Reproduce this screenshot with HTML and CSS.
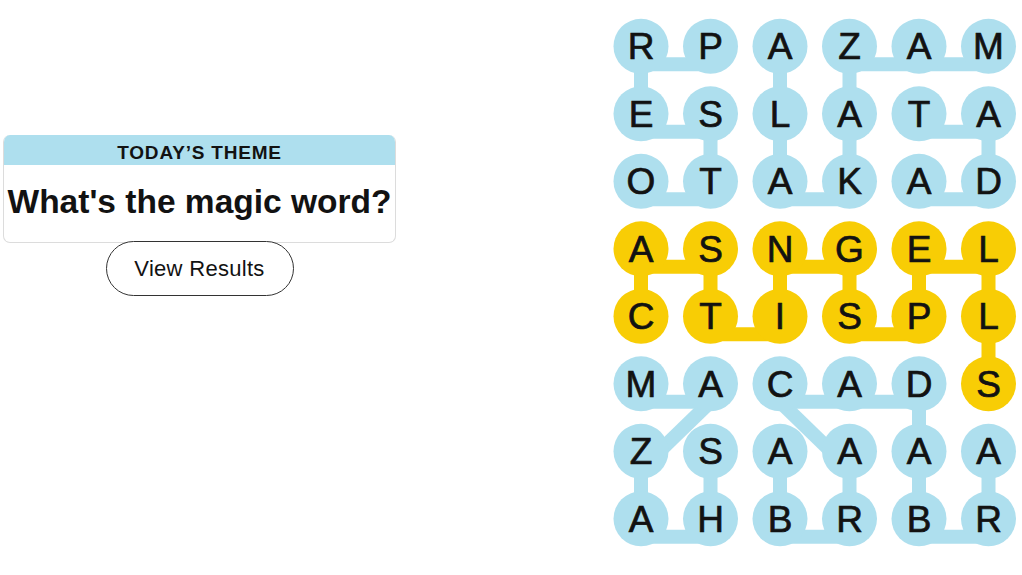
FILE: index.html
```html
<!DOCTYPE html>
<html lang="en">
<head>
  <meta charset="UTF-8" />
  <meta name="viewport" content="width=device-width, initial-scale=1.0"/>
  <title>Strands</title>
  <link rel="stylesheet" href="styles.css">
</head>
<body>
  <div class="page">
    <div class="theme">
      <div class="card">
        <div class="card-head">TODAY’S THEME</div>
        <div class="card-body">What's the magic word?</div>
      </div>
      <button class="results-btn">View Results</button>
    </div>

    <svg id="board" class="board" width="422" height="575" viewBox="0 0 422 575"></svg>
  </div>

  <script>
    const letters = [
      "RPAZAM",
      "ESLATA",
      "OTAKAD",
      "ASNGEL",
      "CTISPL",
      "MACADS",
      "ZSAAAA",
      "AHBRBR"
    ];

    // found words, as [row, col] in the order they were traced
    const words = [
      { color: "#aedfee", cells: [[0,1],[0,0],[1,0],[1,1],[2,1],[2,0]] },
      { color: "#aedfee", cells: [[0,2],[1,2],[2,2],[2,3],[1,3],[0,3],[0,4],[0,5]] },
      { color: "#aedfee", cells: [[1,4],[1,5],[2,5],[2,4]] },
      { color: "#aedfee", cells: [[6,1],[7,1],[7,0],[6,0],[5,1],[5,0]] },
      { color: "#aedfee", cells: [[6,2],[7,2],[7,3],[6,3],[5,2],[5,3],[5,4],[6,4],[7,4],[7,5],[6,5]] },
      { color: "#f8cd05", cells: [[4,0],[3,0],[3,1],[4,1],[4,2],[3,2],[3,3],[4,3],[4,4],[3,4],[3,5],[4,5],[5,5]] }
    ];

    const cx = c => 41 + c * 69.5;
    const cy = r => 46.3 + r * 67.5;
    const lineDrop = 18;

    const colorOf = {};
    words.forEach(w => w.cells.forEach(([r, c]) => colorOf[r + "," + c] = w.color));

    let lines = "";
    words.forEach(w => {
      for (let i = 1; i < w.cells.length; i++) {
        const [r1, c1] = w.cells[i - 1];
        const [r2, c2] = w.cells[i];
        lines += `<line x1="${cx(c1)}" y1="${cy(r1) + lineDrop}" x2="${cx(c2)}" y2="${cy(r2) + lineDrop}" stroke="${w.color}" stroke-width="14"/>`;
      }
    });

    let dots = "";
    letters.forEach((row, r) => {
      row.split("").forEach((ch, c) => {
        const fill = colorOf[r + "," + c] || "#aedfee";
        dots += `<circle cx="${cx(c)}" cy="${cy(r)}" r="27.5" fill="${fill}"/>`;
        dots += `<text class="cell-letter" x="${cx(c)}" y="${cy(r) + 13}" text-anchor="middle">${ch}</text>`;
      });
    });

    document.getElementById("board").innerHTML = lines + dots;
  </script>
</body>
</html>
```

FILE: styles.css
```css
body {
  margin: 0;
  font-family: "Liberation Sans", Arial, sans-serif;
  background: #fff;
  color: #121212;
}

.page {
  display: flex;
  align-items: flex-start;
  height: 575px;
}

.theme {
  width: 393px;
  margin: 135px 0 0 3px;
  display: flex;
  flex-direction: column;
  align-items: center;
}

.card {
  width: 100%;
  box-sizing: border-box;
  border: 1px solid #dcdcdc;
  border-top: none;
  border-radius: 7px;
  overflow: hidden;
}

.card-head {
  height: 30px;
  line-height: 35px;
  background: #aedfee;
  text-align: center;
  font-size: 19px;
  font-weight: bold;
  letter-spacing: 0.8px;
}

.card-body {
  height: 77px;
  line-height: 73px;
  text-align: center;
  font-size: 33.5px;
  font-weight: bold;
  white-space: nowrap;
}

.results-btn {
  margin-top: -2px;
  width: 188px;
  height: 55px;
  border: 1px solid #333;
  border-radius: 28px;
  background: #fff;
  color: #121212;
  font-family: "Liberation Sans", Arial, sans-serif;
  font-size: 22px;
  letter-spacing: 0.3px;
  padding: 0;
}

.board {
  margin-left: auto;
  display: block;
}

.cell-letter {
  font-family: "Liberation Sans", Arial, sans-serif;
  font-size: 37px;
  fill: #121212;
  stroke: #121212;
  stroke-width: 0.7px;
}
```
